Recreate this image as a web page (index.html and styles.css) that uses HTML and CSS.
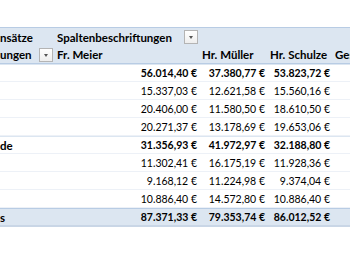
FILE: index.html
```html
<!DOCTYPE html>
<html lang="de">
<head>
<meta charset="utf-8">
<link rel="stylesheet" href="styles.css">
</head>
<body>
<div class="sheet">
  <div class="row head head-top">
    <div class="cell label b">nsätze</div>
    <div class="cell b span-btn"><span>Spaltenbeschriftungen</span><span class="dd"></span></div>
    <div class="cell"></div>
    <div class="cell"></div>
    <div class="cell"></div>
  </div>
  <div class="row head head-bottom">
    <div class="cell label b span-btn"><span>ungen</span><span class="dd"></span></div>
    <div class="cell b">Fr. Meier</div>
    <div class="cell b">Hr. Müller</div>
    <div class="cell b">Hr. Schulze</div>
    <div class="cell b">Gesamtergebnis</div>
  </div>

  <div class="row sub">
    <div class="cell label b"></div>
    <div class="cell num b">56.014,40 €</div>
    <div class="cell num b">37.380,77 €</div>
    <div class="cell num b">53.823,72 €</div>
    <div class="cell"></div>
  </div>
  <div class="row">
    <div class="cell label"></div>
    <div class="cell num">15.337,03 €</div>
    <div class="cell num">12.621,58 €</div>
    <div class="cell num">15.560,16 €</div>
    <div class="cell"></div>
  </div>
  <div class="row">
    <div class="cell label"></div>
    <div class="cell num">20.406,00 €</div>
    <div class="cell num">11.580,50 €</div>
    <div class="cell num">18.610,50 €</div>
    <div class="cell"></div>
  </div>
  <div class="row">
    <div class="cell label"></div>
    <div class="cell num">20.271,37 €</div>
    <div class="cell num">13.178,69 €</div>
    <div class="cell num">19.653,06 €</div>
    <div class="cell"></div>
  </div>
  <div class="row sub">
    <div class="cell label b">de</div>
    <div class="cell num b">31.356,93 €</div>
    <div class="cell num b">41.972,97 €</div>
    <div class="cell num b">32.188,80 €</div>
    <div class="cell"></div>
  </div>
  <div class="row">
    <div class="cell label"></div>
    <div class="cell num">11.302,41 €</div>
    <div class="cell num">16.175,19 €</div>
    <div class="cell num">11.928,36 €</div>
    <div class="cell"></div>
  </div>
  <div class="row">
    <div class="cell label"></div>
    <div class="cell num">9.168,12 €</div>
    <div class="cell num">11.224,98 €</div>
    <div class="cell num">9.374,04 €</div>
    <div class="cell"></div>
  </div>
  <div class="row">
    <div class="cell label"></div>
    <div class="cell num">10.886,40 €</div>
    <div class="cell num">14.572,80 €</div>
    <div class="cell num">10.886,40 €</div>
    <div class="cell"></div>
  </div>
  <div class="row total">
    <div class="cell label b">s</div>
    <div class="cell num b">87.371,33 €</div>
    <div class="cell num b">79.353,74 €</div>
    <div class="cell num b">86.012,52 €</div>
    <div class="cell"></div>
  </div>
</div>
</body>
</html>
```

FILE: styles.css
```css
html, body {
  margin: 0;
  padding: 0;
  background: #ffffff;
}

body {
  width: 350px;
  height: 262px;
  overflow: hidden;
  font-family: Lato, "Liberation Sans", sans-serif;
  font-size: 10.5px;
  color: #000000;
}

.sheet {
  padding-top: 27px;
  overflow: hidden;
}

.row {
  display: grid;
  grid-template-columns: 55px 145px 68px 65px 1fr;
  height: 18px;
  box-sizing: border-box;
  border-bottom: 1px solid #edf1f7;
}

.cell {
  display: flex;
  align-items: center;
  padding: 0 3px 0 2px;
  white-space: nowrap;
  overflow: hidden;
  min-width: 0;
}

.label {
  padding-left: 0;
  font-size: 11.5px;
}

.b {
  font-weight: 700;
}

.num {
  justify-content: flex-end;
}

.head {
  background: #dce6f1;
  border-bottom: none;
}

.head .cell {
  font-size: 11.5px;
}

.head-top {
  border-top: 1px solid #b8cce4;
  height: 19px;
}

.head-bottom {
  border-bottom: 1px solid #b8cce4;
}

.span-btn {
  justify-content: space-between;
  padding-right: 2px;
}

.dd {
  position: relative;
  flex: 0 0 auto;
  width: 14px;
  height: 14px;
  box-sizing: border-box;
  border: 1px solid #b4b4b4;
  background: linear-gradient(#ffffff, #eeeeee);
}

.dd::after {
  content: "";
  position: absolute;
  left: 4px;
  top: 5px;
  border-left: 2.5px solid transparent;
  border-right: 2.5px solid transparent;
  border-top: 3px solid #555555;
}

.sub {
  border-top: 1px solid #dce6f1;
}

.total {
  background: #dce6f1;
  border-top: 1px solid #b8cce4;
  border-bottom: 2px solid #c9d6e6;
  height: 19px;
}
```
